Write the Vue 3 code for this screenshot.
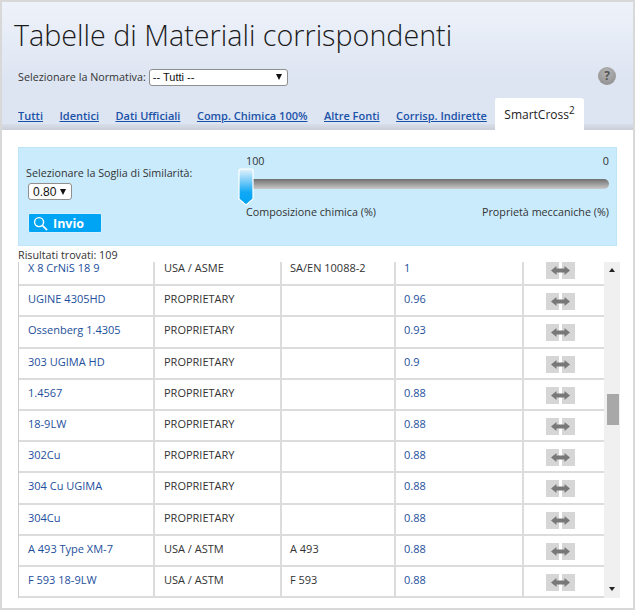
<script setup>
const tabs = ['Tutti', 'Identici', 'Dati Ufficiali', 'Comp. Chimica 100%', 'Altre Fonti', 'Corrisp. Indirette']
const rows = [
  ['X 8 CrNiS 18 9', 'USA / ASME', 'SA/EN 10088-2', '1'],
  ['UGINE 4305HD', 'PROPRIETARY', '', '0.96'],
  ['Ossenberg 1.4305', 'PROPRIETARY', '', '0.93'],
  ['303 UGIMA HD', 'PROPRIETARY', '', '0.9'],
  ['1.4567', 'PROPRIETARY', '', '0.88'],
  ['18-9LW', 'PROPRIETARY', '', '0.88'],
  ['302Cu', 'PROPRIETARY', '', '0.88'],
  ['304 Cu UGIMA', 'PROPRIETARY', '', '0.88'],
  ['304Cu', 'PROPRIETARY', '', '0.88'],
  ['A 493 Type XM-7', 'USA / ASTM', 'A 493', '0.88'],
  ['F 593 18-9LW', 'USA / ASTM', 'F 593', '0.88'],
]
</script>

<template>
  <div class="frame">
    <header class="head">
      <h1 class="title">Tabelle di Materiali corrispondenti</h1>
      <div class="norm">
        <label class="norm-label">Selezionare la Normativa:</label>
        <div class="select norm-select"><span>-- Tutti --</span><i class="caret"></i></div>
        <div class="help">?</div>
      </div>
      <nav class="tabs">
        <a v-for="t in tabs" :key="t" class="tab">{{ t }}</a>
        <span class="tab-active">SmartCross<sup>2</sup></span>
      </nav>
    </header>

    <section class="panel">
      <div class="panel-left">
        <div class="thresh-label">Selezionare la Soglia di Similarità:</div>
        <div class="select thresh-select"><span>0.80</span><i class="caret"></i></div>
        <button class="send">
          <svg width="15" height="15" viewBox="0 0 16 16" fill="none" stroke="#fff" stroke-width="1.5">
            <circle cx="6.5" cy="6.5" r="4.8" />
            <path d="M10 10l5 5" stroke-width="1.8" />
          </svg>
          <span>Invio</span>
        </button>
      </div>
      <div class="slider">
        <div class="slider-top"><span>100</span><span>0</span></div>
        <div class="track">
          <svg class="thumb" width="16" height="38" viewBox="0 0 16 38">
            <defs>
              <linearGradient id="thumbfill" x1="0" y1="0" x2="0" y2="1">
                <stop offset="0" stop-color="#e6f2fb" />
                <stop offset="0.65" stop-color="#10a8f5" />
                <stop offset="1" stop-color="#00a4f5" />
              </linearGradient>
            </defs>
            <path d="M1 2.500a1.500 1.500 0 0 1 1.500-1.500h11a1.500 1.500 0 0 1 1.500 1.500V31l-7 6-7-6z" fill="url(#thumbfill)" stroke="#fff" stroke-width="1.2" />
          </svg>
        </div>
        <div class="slider-bottom"><span>Composizione chimica (%)</span><span>Proprietà meccaniche (%)</span></div>
      </div>
    </section>

    <div class="found">Risultati trovati: 109</div>

    <div class="results">
      <div class="list">
        <div class="rows">
          <div v-for="r in rows" :key="r[0]" class="row">
            <a class="cell name">{{ r[0] }}</a>
            <div class="cell">{{ r[1] }}</div>
            <div class="cell narrow">{{ r[2] }}</div>
            <a class="cell name narrow">{{ r[3] }}</a>
            <div class="cell action">
              <svg width="29" height="17" viewBox="0 0 29 17">
                <rect x="0" width="13" height="17" fill="#d6d6d6" />
                <rect x="16" width="13" height="17" fill="#d6d6d6" />
                <path d="M5 8.500L10.500 4v2.500h8V4L24 8.500 18.500 13v-2.500h-8V13z" fill="#787878" />
              </svg>
            </div>
          </div>
        </div>
      </div>
      <div class="scrollbar">
        <i class="arrow up"></i>
        <div class="scroll-thumb"></div>
        <i class="arrow down"></i>
      </div>
    </div>
  </div>
</template>

<style>
html, body { margin: 0; background: #fff; }
</style>

<style scoped>
.frame {
  box-sizing: border-box;
  width: 635px;
  height: 610px;
  border: 2px solid #d8d8d8;
  background: #fff;
  font-family: "Open Sans", sans-serif;
  font-size: 10.75px;
  color: #333;
  overflow: hidden;
}
.head {
  height: 128px;
  box-sizing: border-box;
  padding: 14px 0 0 12px;
  background:
    linear-gradient(#d9dfea, #c9ced8) bottom / 100% 6px no-repeat,
    linear-gradient(#eef2fa, #dde5f2 62%, #dde5f2);
  position: relative;
}
.title {
  margin: 0;
  font-size: 28.7px;
  line-height: 38px;
  font-weight: 300;
  color: #1b1b1b;
  white-space: nowrap;
}
.norm {
  display: flex;
  align-items: center;
  margin: 14px 0 0 4px;
  height: 18px;
}
.norm-label { margin-right: 3px; white-space: nowrap; }
.select {
  box-sizing: border-box;
  display: flex;
  align-items: center;
  justify-content: space-between;
  background: #fff;
  border: 1px solid #8f8f8f;
  border-radius: 3px;
  font-size: 11px;
  font-family: "Liberation Sans", sans-serif;
  color: #111;
}
.norm-select { width: 139px; height: 17px; padding: 0 5px 0 3px; }
.caret {
  width: 0;
  height: 0;
  border-left: 3.5px solid transparent;
  border-right: 3.5px solid transparent;
  border-top: 6px solid #111;
}
.help {
  position: absolute;
  right: 17px;
  top: 65px;
  width: 18px;
  height: 18px;
  border-radius: 50%;
  background: radial-gradient(circle at 50% 30%, #b5b5b5, #8a8a8a);
  color: #555;
  font-weight: 700;
  font-size: 12px;
  line-height: 18px;
  text-align: center;
}
.tabs {
  position: absolute;
  left: 16px;
  top: 96px;
  display: flex;
  align-items: flex-start;
  height: 32px;
}
.tab {
  color: #1a52a8;
  text-decoration: underline;
  font-weight: 600;
  font-size: 11px;
  margin-right: 16.5px;
  line-height: 15px;
  padding-top: 10px;
  white-space: nowrap;
}
.tab-active {
  position: absolute;
  left: 477px;
  top: 0;
  width: 89px;
  height: 32px;
  box-sizing: border-box;
  padding-top: 8px;
  background: #fff;
  border-radius: 3px 3px 0 0;
  font-size: 12px;
  line-height: 17px;
  color: #222;
  text-align: center;
  white-space: nowrap;
}
.tab-active sup { font-size: 10px; line-height: 0; }
.panel {
  box-sizing: border-box;
  margin: 17px 0 0 16px;
  width: 599px;
  height: 99px;
  background: #c9ebfc;
  border: 1px solid #bde4f8;
  display: flex;
  padding: 0 7px;
}
.panel-left { width: 220px; padding-top: 18px; }
.thresh-label { line-height: 15px; white-space: nowrap; }
.thresh-select {
  width: 44px;
  height: 17px;
  margin: 2px 0 0 2px;
  padding: 0 5px 0 4px;
  font-size: 12px;
}
.send {
  display: flex;
  align-items: center;
  gap: 5px;
  margin: 13px 0 0 2px;
  width: 74px;
  height: 20px;
  padding: 0 0 0 4px;
  border: 1px solid #d5f0ff;
  border-radius: 2px;
  background: #00a4f5;
  color: #fff;
  font-family: "Open Sans", sans-serif;
  font-weight: 700;
  font-size: 12.5px;
}
.slider { flex: 1; min-width: 0; padding-top: 6px; }
.slider-top, .slider-bottom { display: flex; justify-content: space-between; line-height: 15px; }
.track {
  position: relative;
  height: 10px;
  margin-top: 10px;
  border-radius: 0 5px 5px 0;
  background: linear-gradient(#6f6f6f, #c9c9c9);
}
.thumb { position: absolute; left: -8px; top: -11px; }
.slider-bottom { margin-top: 16px; }
.found { margin: 2px 0 0 16px; line-height: 15px; height: 14px; }
.results { display: flex; margin-left: 16px; height: 336px; }
.list { width: 586px; overflow: hidden; border-left: 1px solid #ccc; box-sizing: border-box; }
.rows { margin-top: -7px; }
.row {
  box-sizing: border-box;
  display: grid;
  grid-template-columns: 136px 127px 114px 128px 1fr;
  height: 31.2px;
  border-bottom: 2px solid #dcdcdc;
  font-size: 11px;
}
.cell {
  box-sizing: border-box;
  padding: 5px 0 0 9px;
  line-height: 15px;
  border-right: 2px solid #dcdcdc;
  white-space: nowrap;
}
.narrow { padding-left: 8px; }
.name { color: #1d4f9c; }
.action { border-right: 0; padding: 7px 0 0 22px; }
.scrollbar {
  position: relative;
  width: 16px;
  background: #f0f0f0;
}
.arrow { position: absolute; left: 5px; width: 0; height: 0; border-left: 3px solid transparent; border-right: 3px solid transparent; }
.arrow.up { top: 6px; border-bottom: 4px solid #222; }
.arrow.down { bottom: 7px; border-top: 4px solid #222; }
.scroll-thumb {
  position: absolute;
  left: 3px;
  right: 1px;
  top: 132px;
  height: 31px;
  background: #a8a8a8;
}
</style>
